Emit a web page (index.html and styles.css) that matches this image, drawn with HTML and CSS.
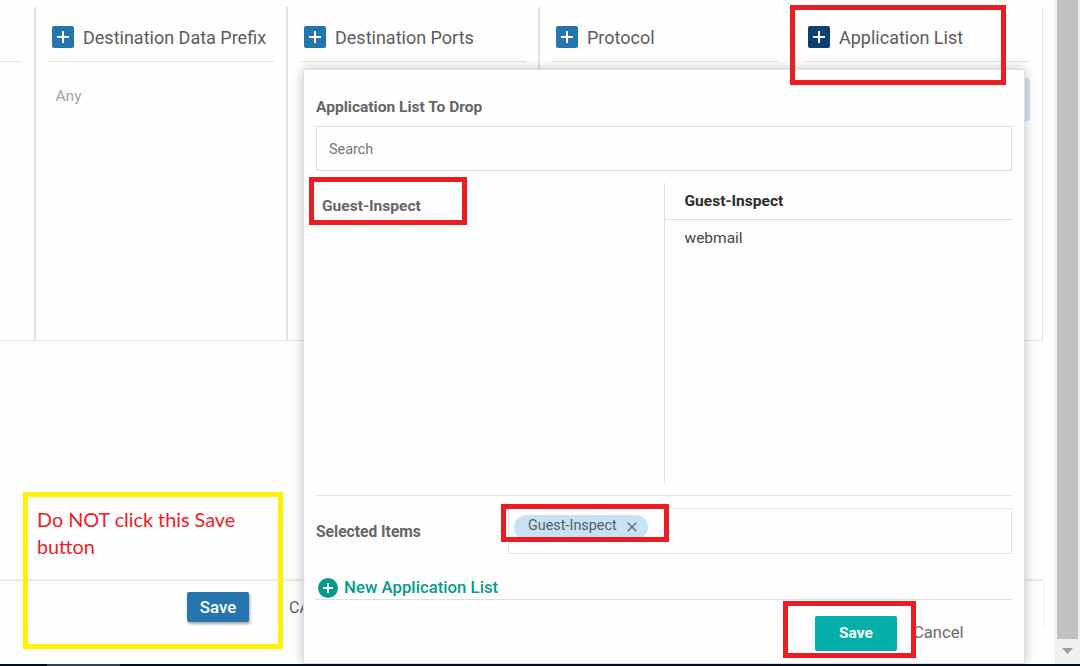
FILE: index.html
```html
<!DOCTYPE html>
<html lang="en">
<head>
<meta charset="utf-8">
<title>Application List</title>
<link rel="stylesheet" href="styles.css">
</head>
<body>
<div class="window">
  <div class="viewport">
    <main class="page">
      <section class="criteria">
        <div class="column column-first"><div class="column-head"></div></div>
        <div class="column">
          <div class="column-head"><svg class="add" viewBox="0 0 22 22"><rect width="22" height="22" rx="2"/><path d="M11 5v12M5 11h12"/></svg><span>Destination Data Prefix</span></div>
          <div class="any">Any</div>
        </div>
        <div class="column">
          <div class="column-head"><svg class="add" viewBox="0 0 22 22"><rect width="22" height="22" rx="2"/><path d="M11 5v12M5 11h12"/></svg><span>Destination Ports</span></div>
        </div>
        <div class="column">
          <div class="column-head"><svg class="add" viewBox="0 0 22 22"><rect width="22" height="22" rx="2"/><path d="M11 5v12M5 11h12"/></svg><span>Protocol</span></div>
        </div>
        <div class="column column-last">
          <div class="column-head"><svg class="add active" viewBox="0 0 22 22"><rect width="22" height="22" rx="2"/><path d="M11 5v12M5 11h12"/></svg><span>Application List</span></div>
          <div class="value"></div>
        </div>
      </section>
      <footer class="actions">
        <button class="page-save">Save</button>
        <span class="page-cancel">CANCEL</span>
      </footer>
    </main>
    <aside class="scrollbar">
      <div class="thumb"></div>
      <svg class="arrow" viewBox="0 0 11 6"><path d="M0 0h11L5.5 6z"/></svg>
    </aside>
  </div>
  <div class="taskbar"><div class="task"></div></div>
</div>

<section class="popup">
  <h2 class="popup-title">Application List To Drop</h2>
  <div class="search">Search</div>
  <div class="lists">
    <div class="list-names">Guest-Inspect</div>
    <div class="list-detail">
      <div class="detail-head">Guest-Inspect</div>
      <div class="detail-item">webmail</div>
    </div>
  </div>
  <div class="selected">
    <span class="selected-label">Selected Items</span>
    <div class="selected-field">
      <div class="chip"><span>Guest-Inspect</span><svg class="close" viewBox="0 0 10 10"><path d="M.7.7l8.6 8.6M9.3.7L.7 9.3"/></svg></div>
    </div>
  </div>
  <div class="new-list">
    <svg class="new-icon" viewBox="0 0 20 20"><circle cx="10" cy="10" r="10"/><path d="M10 5v10M5 10h10"/></svg>
    <span class="new-label">New Application List</span>
  </div>
  <div class="popup-actions">
    <button class="popup-save">Save</button>
    <span class="popup-cancel">Cancel</span>
  </div>
</section>

<div class="mark mark-column"></div>
<div class="mark mark-name"></div>
<div class="mark mark-chip"></div>
<div class="mark mark-save"></div>
<div class="mark mark-warning">Do NOT click this Save button</div>
</body>
</html>
```
FILE: styles.css
```css
* { box-sizing: border-box; }
body {
  margin: 0;
  width: 1080px;
  height: 666px;
  overflow: hidden;
  background: #fefefe;
  color: #5c5c5c;
  font-family: Roboto, "Liberation Sans", sans-serif;
}
button { border: 0; padding: 0; font-family: inherit; color: #fff; }
.window { height: 666px; display: flex; flex-direction: column; }
.viewport { flex: 1; display: flex; min-height: 0; }
.page { flex: 1; padding-top: 7px; display: flex; flex-direction: column; }
.criteria {
  width: 1043px;
  height: 334px;
  display: grid;
  grid-template-columns: 34px 252px 252px 252px 253px;
  border-bottom: 1px solid #e2e2e2;
}
.column { border-left: 2px solid #e2e2e2; padding: 0 12px; }
.column-first { border-left: 0; padding-left: 0; }
.column-last { border-right: 1px solid #e2e2e2; }
.column-head {
  height: 55px;
  padding: 5px 0 0 4px;
  display: flex;
  align-items: center;
  gap: 9px;
  border-bottom: 1px solid #e2e2e2;
  font-size: 18px;
  white-space: nowrap;
}
.column-head span { padding-top: 2px; }
.add { width: 22px; height: 22px; flex: none; fill: #2576ae; stroke-width: 2; }
.add rect { stroke: none; }
.add path { stroke: #fff; }
.add.active { fill: #10406f; }
.any { padding: 25px 7.5px; font-size: 15.5px; line-height: 18px; color: #a2a2a2; }
.value { height: 43px; margin-top: 16px; border-radius: 3px; background: #d4e4f5; }
.actions {
  width: 1043px;
  height: 49px;
  margin-top: 240px;
  padding: 3px 0 0 187px;
  display: flex;
  align-items: center;
  gap: 40px;
  box-shadow: 0 -1px 2px rgba(0, 0, 0, .16);
}
.page-save {
  width: 62px;
  height: 30px;
  border-radius: 2px;
  background: #2576ae;
  box-shadow: 1px 2px 3px rgba(0, 0, 0, .35);
  font-size: 16.8px;
  font-weight: 500;
}
.page-cancel { font-size: 16px; }
.scrollbar {
  width: 25px;
  padding: 0 2px;
  background: #f0f0f0;
  display: flex;
  flex-direction: column;
  align-items: center;
}
.thumb { width: 21px; height: 639px; background: #c0c0c0; }
.arrow { width: 11px; height: 6px; margin-top: 9px; fill: #a0a0a0; }
.taskbar { height: 2px; padding-left: 47px; background: #020f20; }
.task { width: 73px; height: 2px; background: #344252; }

.popup {
  position: absolute;
  left: 303px;
  top: 69px;
  width: 722px;
  height: 595px;
  padding: 27px 12px 0;
  border: 1px solid #dedede;
  border-radius: 2px;
  background: #fefefe;
  box-shadow: 0 0 12px rgba(0, 0, 0, .24);
}
.popup-title { margin: 0; height: 29px; font-size: 15.55px; line-height: 20px; font-weight: 700; color: #666; }
.search {
  height: 45px;
  padding: 0 12px;
  border: 1px solid #dedede;
  font-size: 14.4px;
  line-height: 46px;
  color: #767676;
}
.lists { height: 325px; padding: 12px 0; display: flex; border-bottom: 1px solid #e2e2e2; }
.list-names { width: 348px; padding: 13px 6px; font-size: 15.55px; line-height: 20px; font-weight: 700; color: #666; }
.list-detail { flex: 1; border-left: 1px solid #dedede; color: #444; }
.detail-head {
  height: 37px;
  padding-left: 19.5px;
  border-bottom: 1px solid #dedede;
  font-size: 15.55px;
  line-height: 36px;
  font-weight: 700;
  color: #2b2b2b;
}
.detail-item { padding: 8px 19.5px; font-size: 15.5px; line-height: 20px; }
.selected { height: 58px; padding-top: 12px; display: flex; align-items: center; }
.selected-label { width: 192px; padding-top: 2px; font-size: 15.6px; font-weight: 700; color: #666; }
.selected-field { flex: 1; height: 46px; padding: 6px 5px; border: 1px solid #e2e2e2; }
.chip {
  width: 134px;
  height: 24px;
  padding-left: 14px;
  border-radius: 12px;
  display: flex;
  gap: 10.5px;
  background: #c6e2f4;
  font-size: 14.4px;
  line-height: 21px;
}
.close { width: 10px; height: 10px; margin-top: 7px; stroke: #666; stroke-width: 1.3; fill: none; }
.new-list {
  height: 46px;
  padding: 23px 1px 0 2px;
  display: flex;
  align-items: center;
  gap: 6px;
  border-bottom: 1px solid #dedede;
  color: #069b89;
  font-size: 16.8px;
  font-weight: 500;
}
.new-icon { width: 20px; height: 20px; fill: #069b89; stroke-width: 2; }
.new-label { padding-bottom: 2px; }
.new-icon circle { stroke: none; }
.new-icon path { stroke: #fff; }
.popup-actions { padding: 16px 0 0 499px; display: flex; align-items: center; gap: 16px; }
.popup-save { width: 82px; height: 35px; padding-bottom: 2px; border-radius: 2px; background: #04aea9; font-size: 15.5px; font-weight: 700; }
.popup-cancel { padding-bottom: 2px; font-size: 16.6px; color: #6c6c6c; }

.mark { position: absolute; border: 5px solid #ed1c24; }
.mark-column { left: 790px; top: 5px; width: 216px; height: 80px; }
.mark-name { left: 309px; top: 177px; width: 158px; height: 48px; }
.mark-chip { left: 501px; top: 504px; width: 168px; height: 38px; }
.mark-save { left: 783px; top: 601px; width: 133px; height: 57px; }
.mark-warning {
  left: 23px;
  top: 492px;
  width: 260px;
  height: 157px;
  padding: 9px;
  border-color: #fff200;
  color: #ed1c24;
  font-family: Lato, "Open Sans", sans-serif;
  font-size: 19.8px;
  line-height: 27px;
}
```
